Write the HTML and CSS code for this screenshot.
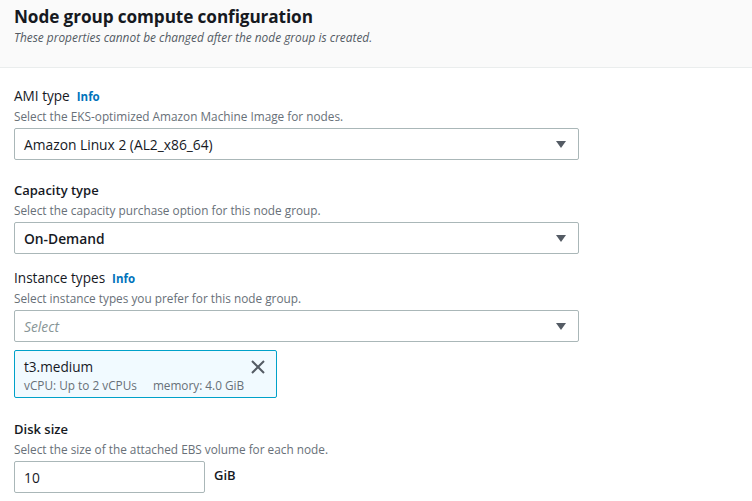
FILE: index.html
```html
<!DOCTYPE html>
<html lang="en">
<head>
<meta charset="utf-8">
<title>Node group compute configuration</title>
<link rel="stylesheet" href="styles.css">
</head>
<body>
<div class="panel">
  <header class="panel-header">
    <h2 class="panel-title">Node group compute configuration</h2>
    <p class="panel-desc">These properties cannot be changed after the node group is created.</p>
  </header>
  <div class="panel-body">
    <div class="field field-ami">
      <div class="label">AMI type <a class="info" href="#">Info</a></div>
      <div class="hint">Select the EKS-optimized Amazon Machine Image for nodes.</div>
      <div class="select">
        <span class="value">Amazon Linux 2 (AL2_x86_64)</span>
        <svg class="caret" width="10" height="7" viewBox="0 0 10 7"><path d="M0 0H10L5 7Z" fill="#545b64"/></svg>
      </div>
    </div>
    <div class="field field-capacity">
      <div class="label">Capacity type</div>
      <div class="hint">Select the capacity purchase option for this node group.</div>
      <div class="select">
        <span class="value">On-Demand</span>
        <svg class="caret" width="10" height="7" viewBox="0 0 10 7"><path d="M0 0H10L5 7Z" fill="#545b64"/></svg>
      </div>
    </div>
    <div class="field field-instance">
      <div class="label">Instance types <a class="info" href="#">Info</a></div>
      <div class="hint">Select instance types you prefer for this node group.</div>
      <div class="select">
        <span class="placeholder">Select</span>
        <svg class="caret" width="10" height="7" viewBox="0 0 10 7"><path d="M0 0H10L5 7Z" fill="#545b64"/></svg>
      </div>
      <div class="token">
        <div class="token-text">
          <div class="token-name">t3.medium</div>
          <div class="token-tags"><span>vCPU: Up to 2 vCPUs</span><span>memory: 4.0 GiB</span></div>
        </div>
        <svg class="dismiss" width="16" height="16" viewBox="0 0 16 16"><path d="M2 2L14 14M14 2L2 14" stroke="#545b64" stroke-width="2" fill="none"/></svg>
      </div>
    </div>
    <div class="field field-disk">
      <div class="label">Disk size</div>
      <div class="hint">Select the size of the attached EBS volume for each node.</div>
      <div class="disk-row">
        <div class="input">10</div>
        <span class="unit">GiB</span>
      </div>
    </div>
  </div>
</div>
</body>
</html>
```
FILE: styles.css
```css
* { box-sizing: border-box; }
html, body { margin: 0; padding: 0; background: #ffffff; }
body {
  font-family: "Open Sans", "Noto Sans", "Liberation Sans", sans-serif;
  color: #16191f;
  width: 752px;
  height: 501px;
  overflow: hidden;
}
.panel-header {
  background: #fafafa;
  border-bottom: 1px solid #eaeded;
  padding: 6px 14px 0 14px;
  height: 68px;
}
.panel-title {
  margin: 0;
  font-size: 17.2px;
  font-weight: 700;
  line-height: 22px;
  letter-spacing: -0.1px;
}
.panel-desc {
  margin: 1px 0 0 0;
  font-size: 11.9px;
  font-style: italic;
  color: #545b64;
  line-height: 16px;
}
.panel-body {
  padding: 18px 14px 0 14px;
}
.field { display: flex; flex-direction: column; }
.field-capacity { margin-top: 20px; }
.field-instance { margin-top: 14px; }
.field-disk { margin-top: 21px; }
.label {
  display: flex;
  align-items: baseline;
  height: 20px;
  font-size: 13.6px;
  line-height: 20px;
  color: #16191f;
}
.field-capacity .label, .field-disk .label { font-weight: 600; font-size: 13px; }
.info {
  color: #0073bb;
  font-size: 11.5px;
  line-height: 16px;
  font-weight: 700;
  text-decoration: none;
  margin-left: 7px;
}
.hint {
  margin-top: 2px;
  font-size: 11.8px;
  line-height: 16px;
  color: #687078;
}
.select {
  margin-top: 4px;
  width: 565px;
  height: 32px;
  border: 1px solid #aab7b8;
  border-radius: 2px;
  display: flex;
  align-items: center;
  justify-content: space-between;
  padding: 0 12px 0 9px;
  font-size: 13.8px;
}
.value { color: #16191f; }
.field-capacity .value { font-weight: 600; }
.placeholder { color: #879596; font-style: italic; }
.caret { display: block; margin-top: 1px; }
.token {
  margin-top: 8px;
  width: 263px;
  height: 48px;
  background: #f1faff;
  border: 1px solid #00a1c9;
  border-radius: 2px;
  display: flex;
  align-items: flex-start;
  justify-content: space-between;
  padding: 6px 10px 0 9px;
}
.token-name { font-size: 13.6px; line-height: 20px; }
.token-tags {
  font-size: 11.8px;
  line-height: 16px;
  color: #687078;
  display: flex;
  gap: 16px;
}
.dismiss { margin-top: 2px; display: block; }
.disk-row { margin-top: 4px; display: flex; align-items: center; gap: 9px; }
.input {
  width: 191px;
  height: 32px;
  border: 1px solid #aab7b8;
  border-radius: 2px;
  padding: 0 9px;
  display: flex;
  align-items: center;
  font-size: 13.8px;
}
.unit { font-size: 13px; font-weight: 600; margin-top: -4px; }
```
